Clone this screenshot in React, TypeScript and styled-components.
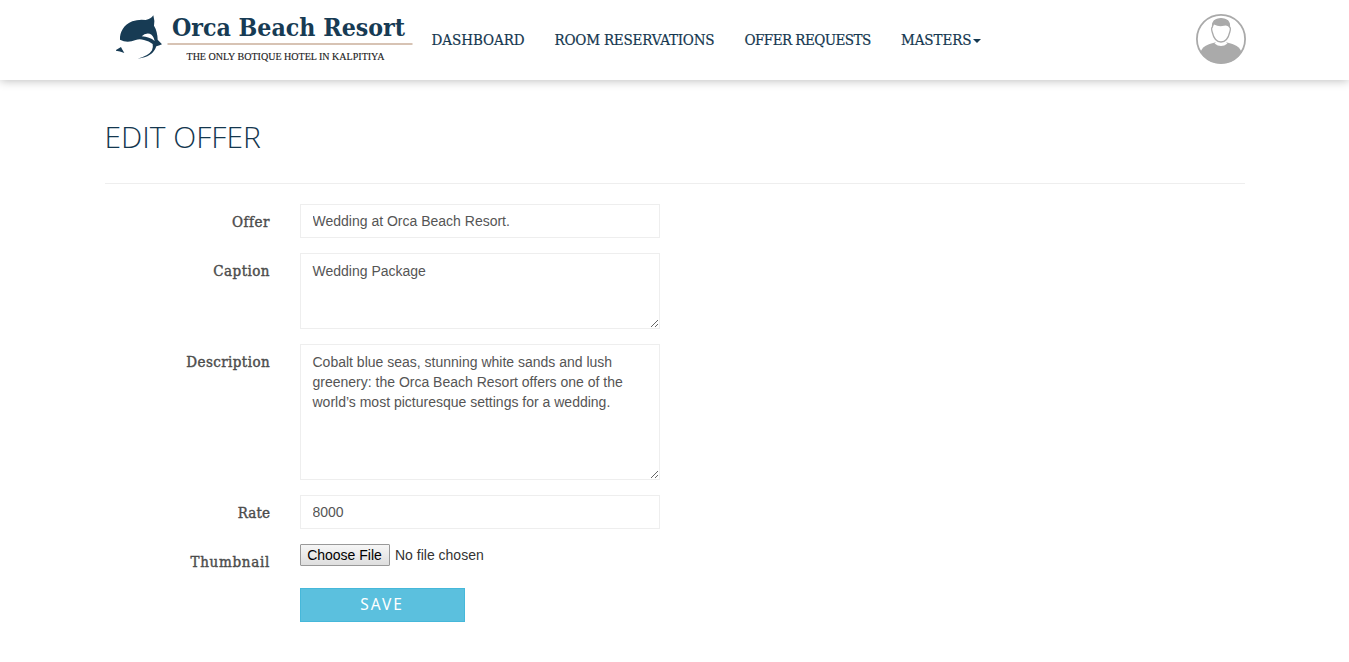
import React from "react";
import styled, { createGlobalStyle } from "styled-components";

const GlobalStyle = createGlobalStyle`
  *, *::before, *::after { box-sizing: border-box; }
  body {
    margin: 0;
    background: #fff;
    color: #4c4c4c;
    font-family: "Liberation Sans", Arial, sans-serif;
    font-size: 14px;
    line-height: 20px;
    overflow: hidden;
  }
`;

const Header = styled.header`
  height: 80px;
  background: #fff;
  box-shadow: 0 0 10px rgba(0, 0, 0, 0.3);
`;

const Container = styled.div`
  width: 1140px;
  margin-left: 105px;
`;

const HeaderRow = styled(Container)`
  display: flex;
  align-items: flex-start;
  height: 80px;
  padding-left: 10px;
`;

const Logo = styled.svg`
  display: block;
  flex: none;
  width: 300px;
  height: 70px;
`;

const Nav = styled.nav`
  display: flex;
  gap: 30px;
  padding: 30px 0 0 16.5px;
`;

const NavLink = styled.a<{ $width: number; $spacing: number }>`
  display: flex;
  align-items: center;
  width: ${(p) => p.$width}px;
  color: #14374f;
  font: 15px/20px "DejaVu Serif Condensed", "DejaVu Serif", serif;
  font-stretch: condensed;
  letter-spacing: ${(p) => p.$spacing}px;
  -webkit-text-stroke: 0.2px #14374f;
  white-space: nowrap;
  text-decoration: none;
`;

const Caret = styled.span`
  border: 4px solid transparent;
  border-top-color: #14374f;
  border-bottom: 0;
  margin: 2px 0 0 1.5px;
`;

const Avatar = styled.svg`
  display: block;
  width: 50px;
  height: 50px;
  margin: 14px -1px 0 auto;
`;

const Title = styled.h1`
  margin: 0 0 0 -0.5px;
  padding: 36px 0 26px;
  color: #14374f;
  font: 300 30px/41px "Open Sans", sans-serif;
`;

const Form = styled.form`
  display: grid;
  grid-template-columns: 165px 360px;
  column-gap: 30px;
  row-gap: 15px;
  padding-top: 20px;
  border-top: 1px solid #eee;
`;

const Label = styled.label<{ $spacing?: number }>`
  padding-top: 8px;
  text-align: right;
  font: 15px/20px "DejaVu Serif Condensed", "DejaVu Serif", serif;
  font-stretch: condensed;
  letter-spacing: ${(p) => p.$spacing ?? 0}px;
  -webkit-text-stroke: 0.4px #4c4c4c;
`;

const Input = styled.input`
  width: 360px;
  height: 34px;
  padding: 6px 11.5px;
  border: 1px solid #eee;
  color: #555;
  background: #fff;
  font: 14px/20px "Liberation Sans", Arial, sans-serif;
  outline: none;
`;

const TextArea = styled.textarea<{ $height: number }>`
  display: block;
  width: 360px;
  height: ${(p) => p.$height}px;
  padding: 7px 11.5px;
  border: 1px solid #eee;
  color: #555;
  background: #fff;
  font: 14px/20px "Liberation Sans", Arial, sans-serif;
  outline: none;
  overflow: auto;
`;

const FileField = styled.div`
  display: flex;
  align-items: center;
  gap: 5px;
  height: 22px;
  color: #333;
`;

const FileButton = styled.button`
  width: 90px;
  height: 22px;
  padding: 0 1px 0 0;
  border: 1px solid #999;
  border-radius: 1px;
  background: linear-gradient(#f6f6f6, #dedede);
  color: #000;
  font: 14px/20px "Liberation Sans", Arial, sans-serif;
`;

const SaveButton = styled.button`
  grid-column: 2;
  width: 165px;
  height: 34px;
  margin-top: 1px;
  padding: 0 1px 2px 0;
  border: 1px solid #46b8da;
  background: #5bc0de;
  color: #fff;
  font: 15.5px/20px "Noto Sans", "Open Sans", sans-serif;
  letter-spacing: 2px;
`;

function OrcaLogo() {
  return (
    <Logo viewBox="0 0 300 70" aria-label="Orca Beach Resort">
      <g transform="translate(-10 5) scale(0.33333)" fill="#173b54">
        <path d="M45 104 C44 82 56 59 82 49 Q101 42 122 45 Q138 42 145 31 Q150 48 147 62 Q157 78 158 104 L171 118 Q161 123 154 124 Q143 157 98 161 Q131 153 141 136 Q145 126 143 117 Q132 108 117 105 Q104 101 92 105 Q66 116 45 104 Z" />
        <path d="M33 135 L48 126 L51 132 L58 144 Q44 138 33 137 Z" />
        <path d="M110 94 Q120 83 134 86 Q146 91 149 108 Q134 96 110 94 Z" fill="#fff" />
      </g>
      <text x="57" y="35.5" textLength="233" lengthAdjust="spacingAndGlyphs" fill="#173b54" fontFamily="DejaVu Serif Condensed, DejaVu Serif, serif" fontStretch="condensed" fontWeight="700" fontSize="24.5">Orca Beach Resort</text>
      <path d="M52.500 44H297.500" stroke="#d7c3b4" strokeWidth="1.8" />
      <text x="71.500" y="59.800" textLength="198" lengthAdjust="spacingAndGlyphs" fill="#222" stroke="#222" strokeWidth="0.15" fontFamily="Liberation Serif, serif" fontSize="11">THE ONLY BOTIQUE HOTEL IN KALPITIYA</text>
    </Logo>
  );
}

function UserAvatar() {
  return (
    <Avatar viewBox="0 0 50 50" aria-label="Account">
      <circle cx="25" cy="25" r="24.100" fill="#fff" stroke="#aaa" strokeWidth="1.800" />
      <path d="M4.500 38.500 C6 32.500 11 30.500 19 28.500 H31 C39 30.500 44 32.500 45.500 38.500 A24.500 24.500 0 0 1 4.500 38.500 Z" fill="#aaa" />
      <path d="M20 25 V28 Q19.500 29 18.500 29.500 Q25 34.500 31.500 29.500 Q30.500 29 30 28 V25 Z" fill="#fff" />
      <path d="M16.400 13 Q16 4.800 25 4.600 Q34 4.800 33.600 13 Q35 14 33.800 18 Q31.500 28 25 28 Q18.500 28 16.200 18 Q15 14 16.400 13 Z" fill="#fff" stroke="#aaa" strokeWidth="1.300" />
      <path d="M16.400 14 Q15.500 4.600 25 4.600 Q34.500 4.600 33.600 14 Q32 10.500 28 11.700 Q23 13 18 10.500 Z" fill="#aaa" />
    </Avatar>
  );
}

export default function App() {
  return (
    <>
      <GlobalStyle />
      <Header>
        <HeaderRow>
          <OrcaLogo />
          <Nav>
            <NavLink $width={93} $spacing={-0.05}>DASHBOARD</NavLink>
            <NavLink $width={160} $spacing={-0.2}>ROOM RESERVATIONS</NavLink>
            <NavLink $width={126.5} $spacing={-0.55}>OFFER REQUESTS</NavLink>
            <NavLink $width={80} $spacing={-0.1}>MASTERS<Caret /></NavLink>
          </Nav>
          <UserAvatar />
        </HeaderRow>
      </Header>
      <Container as="main">
        <Title>EDIT OFFER</Title>
        <Form onSubmit={(e) => e.preventDefault()}>
          <Label htmlFor="offer" $spacing={0.5}>Offer</Label>
          <Input id="offer" defaultValue="Wedding at Orca Beach Resort." />
          <Label htmlFor="caption" $spacing={0.45}>Caption</Label>
          <TextArea id="caption" $height={76} defaultValue="Wedding Package" />
          <Label htmlFor="description" $spacing={0.4}>Description</Label>
          <TextArea
            id="description"
            $height={136}
            defaultValue="Cobalt blue seas, stunning white sands and lush greenery: the Orca Beach Resort offers one of the world’s most picturesque settings for a wedding."
          />
          <Label htmlFor="rate" $spacing={0.1}>Rate</Label>
          <Input id="rate" defaultValue="8000" />
          <Label htmlFor="thumbnail" $spacing={0.7}>Thumbnail</Label>
          <FileField>
            <FileButton id="thumbnail" type="button">Choose File</FileButton>
            <span>No file chosen</span>
          </FileField>
          <SaveButton type="submit">SAVE</SaveButton>
        </Form>
      </Container>
    </>
  );
}
